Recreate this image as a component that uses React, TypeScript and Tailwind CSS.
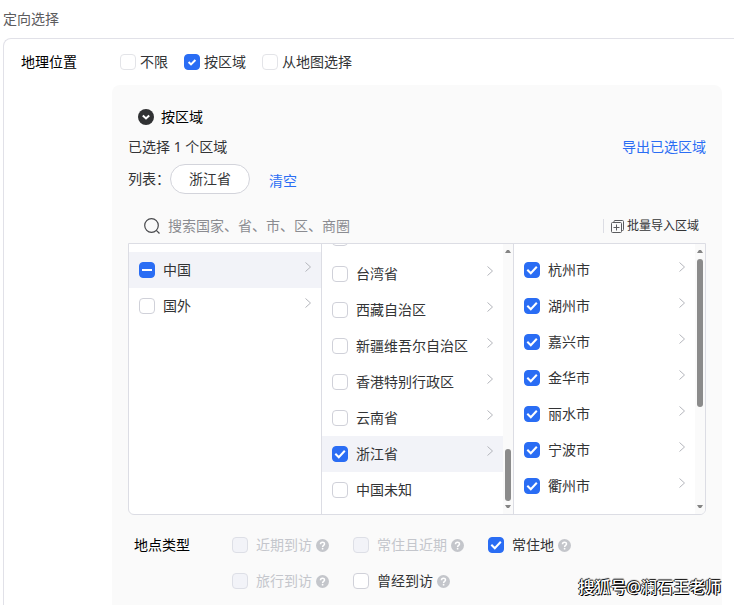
import { clsx } from 'clsx';

interface CheckboxProps {
  label: string;
  checked?: boolean;
  partial?: boolean;
  disabled?: boolean;
  light?: boolean;
  gap?: string;
}

interface Region {
  name: string;
  checked?: boolean;
  partial?: boolean;
  active?: boolean;
  leaf?: boolean;
}

const countries: Region[] = [
  { name: '中国', partial: true, active: true },
  { name: '国外' },
];

const provinces: Region[] = [
  { name: '', leaf: true },
  { name: '台湾省' },
  { name: '西藏自治区' },
  { name: '新疆维吾尔自治区' },
  { name: '香港特别行政区' },
  { name: '云南省' },
  { name: '浙江省', checked: true, active: true },
  { name: '中国未知', leaf: true },
];

const cities: Region[] = [
  { name: '杭州市', checked: true },
  { name: '湖州市', checked: true },
  { name: '嘉兴市', checked: true },
  { name: '金华市', checked: true },
  { name: '丽水市', checked: true },
  { name: '宁波市', checked: true },
  { name: '衢州市', checked: true },
];

const placeTypes = [
  { name: '近期到访', disabled: true },
  { name: '常住且近期', disabled: true },
  { name: '常住地', checked: true },
  { name: '旅行到访', disabled: true },
  { name: '曾经到访' },
];

function Checkbox({ label, checked, partial, disabled, light, gap = 'gap-2' }: CheckboxProps) {
  const filled = checked || partial;
  return (
    <label className={clsx('flex items-center', gap, disabled ? 'text-[#c4c6cc]' : 'text-[#333436]')}>
      <span className="relative flex size-4 shrink-0">
        <input
          type="checkbox"
          defaultChecked={filled}
          disabled={disabled}
          className={clsx(
            'size-4 appearance-none rounded-sm border',
            filled && 'border-[#2a6df4] bg-[#2a6df4]',
            !filled && disabled && 'border-[#dddfe6] bg-[#f2f3f8]',
            !filled && !disabled && 'bg-white',
            !filled && !disabled && (light ? 'border-[#e3e4e8]' : 'border-[#d0d1d9]'),
          )}
        />
        {filled && (
          <svg className="pointer-events-none absolute inset-0 size-4" viewBox="0 0 16 16" fill="none" stroke="white" strokeWidth="2">
            {partial ? <path d="M3 8h10" /> : <path d={light ? 'M4.6 8l2.4 2.4 4.4-4.4' : 'M3.3 7.8l3.5 3.5 6-6.5'} />}
          </svg>
        )}
      </span>
      <span>{label}</span>
    </label>
  );
}

function RegionRow({ region }: { region: Region }) {
  return (
    <li className={clsx('flex h-9 shrink-0 items-center justify-between pr-[9px] pl-[10px]', region.active && 'bg-[#f2f3f8]')}>
      <Checkbox label={region.name} checked={region.checked} partial={region.partial} />
      {!region.leaf && (
        <svg className="mb-[6px] h-3 w-2 shrink-0" viewBox="0 0 8 12" fill="none" stroke="#b4b6bc">
          <path d="M1.5 1.5L6.5 6l-5 4.5" />
        </svg>
      )}
    </li>
  );
}

function ScrollBar({ thumb }: { thumb: string }) {
  return (
    <div className="flex w-[10px] shrink-0 flex-col items-center bg-[#fafafa] py-[6px]">
      <svg className="h-[3px] w-[6px] shrink-0" viewBox="0 0 6 3" fill="#858585">
        <path d="M0 3L2 0h2l2 3z" />
      </svg>
      <div className="flex w-[6px] flex-1 flex-col pt-[6px] pb-1">
        <div className={clsx('w-full rounded-full bg-[#8b8b8b]', thumb)} />
      </div>
      <svg className="h-[3px] w-[6px] shrink-0" viewBox="0 0 6 3" fill="#858585">
        <path d="M0 0L2 3h2l2-3z" />
      </svg>
    </div>
  );
}

function HelpIcon() {
  return (
    <svg className="size-[13px] shrink-0" viewBox="0 0 13 13" fill="none">
      <circle cx="6.5" cy="6.5" r="6.5" fill="#c4c6cb" />
      <path d="M4.5 5.3c0-2.8 4-2.7 4-.2 0 1.3-1.9 1.3-1.9 2.8" stroke="white" strokeWidth="1.5" />
      <circle cx="6.6" cy="9.7" r="0.9" fill="white" />
    </svg>
  );
}

function RegionPicker() {
  return (
    <div className="grid h-[272px] grid-cols-3 overflow-hidden rounded-b-md border border-[#dcdde4] bg-white">
      <ul className="overflow-hidden pt-2">
        {countries.map((region) => (
          <RegionRow key={region.name} region={region} />
        ))}
      </ul>
      <div className="flex overflow-hidden border-l border-[#dcdde4]">
        <ul className="-mt-6 flex-1">
          {provinces.map((region) => (
            <RegionRow key={region.name} region={region} />
          ))}
        </ul>
        <ScrollBar thumb="mt-auto h-[52px]" />
      </div>
      <div className="flex overflow-hidden border-l border-[#dcdde4]">
        <ul className="flex-1 pt-2">
          {cities.map((region) => (
            <RegionRow key={region.name} region={region} />
          ))}
        </ul>
        <ScrollBar thumb="h-[148px]" />
      </div>
    </div>
  );
}

export default function App() {
  return (
    <div className="relative flex h-screen flex-col overflow-hidden bg-white pt-2 pl-[3px] font-['Noto_Sans','Noto_Sans_CJK_SC',sans-serif] text-sm leading-[22px] text-[#333436]">
      <h1 className="mb-2 text-[#5c5c5e]">定向选择</h1>

      <section className="flex flex-1 items-start rounded-tl-lg border-t border-l border-[#e1e1e8] pr-3 pl-[17px]">
        <h2 className="w-[91px] shrink-0 pt-3 text-black">地理位置</h2>
        <div className="min-w-0 flex-1">
          <div className="flex gap-4 py-3 pl-2">
            <Checkbox label="不限" light gap="gap-1" />
            <Checkbox label="按区域" checked light gap="gap-1" />
            <Checkbox label="从地图选择" light gap="gap-1" />
          </div>

          <div className="rounded-t-lg bg-[#fafafa] px-4 pt-[21px] pb-8">
            <button type="button" className="flex items-center gap-[7px] pl-[10px] text-black">
              <svg className="size-4" viewBox="0 0 16 16" fill="none">
                <circle cx="8" cy="8" r="8" fill="#303133" />
                <path d="M4.800 6.500L8 9.500l3.200-3" stroke="white" strokeWidth="2" />
              </svg>
              按区域
            </button>

            <div className="mt-2 flex justify-between">
              <span>已选择 1 个区域</span>
              <a href="#export" className="text-[#2a6df4]">导出已选区域</a>
            </div>

            <div className="mt-[6px] flex items-center">
              <span>列表：</span>
              <span className="rounded-full border border-[#d3d4db] bg-white px-[18px] py-[3px]">浙江省</span>
              <button type="button" className="ml-[19px] pt-1 text-[#2a6df4]">清空</button>
            </div>

            <div className="flex h-[49px] items-center justify-between pt-[15px] pr-[7px] pl-4">
              <div className="flex flex-1 items-center gap-2">
                <svg className="size-4" viewBox="0 0 16 16" fill="none" stroke="#48494c" strokeWidth="1.2">
                  <circle cx="7.5" cy="7.5" r="6.8" />
                  <path d="M12.3 12.3l3.2 3.2" />
                </svg>
                <input
                  type="text"
                  aria-label="搜索国家、省、市、区、商圈"
                  placeholder="搜索国家、省、市、区、商圈"
                  className="flex-1 bg-transparent outline-none placeholder:text-[#8b8c91]"
                />
              </div>
              <button type="button" className="flex items-center gap-[3px] text-xs">
                <span className="mr-1 h-[14px] w-px bg-[#dcdde4]" />
                <svg className="size-[13px]" viewBox="0 0 13 13" fill="none" stroke="#5a5b5e">
                  <path d="M3 2.5v-1a1 1 0 011-1h7.500a1 1 0 011 1V9.500a1 1 0 01-1 1h-1" />
                  <rect x="0.500" y="2.500" width="10" height="10" rx="1" />
                  <path d="M5.500 4.500v6M2.500 7.500h6" />
                </svg>
                批量导入区域
              </button>
            </div>

            <RegionPicker />

            <div className="mt-[19px] flex pl-[6px]">
              <h3 className="w-[98px] shrink-0 text-black">地点类型</h3>
              <div className="grid grid-cols-[repeat(3,max-content)] gap-x-6 gap-y-[14px]">
                {placeTypes.map((type) => (
                  <div key={type.name} className="flex items-center gap-1">
                    <Checkbox label={type.name} checked={type.checked} disabled={type.disabled} />
                    <HelpIcon />
                  </div>
                ))}
              </div>
            </div>
          </div>
        </div>
      </section>

      <p className="absolute right-[13px] bottom-[6px] text-base font-medium text-white [text-shadow:1px_1px_0_#000,-1px_0_0_#000,0_-1px_1px_#000]">
        搜狐号@澜石王老师
      </p>
    </div>
  );
}
